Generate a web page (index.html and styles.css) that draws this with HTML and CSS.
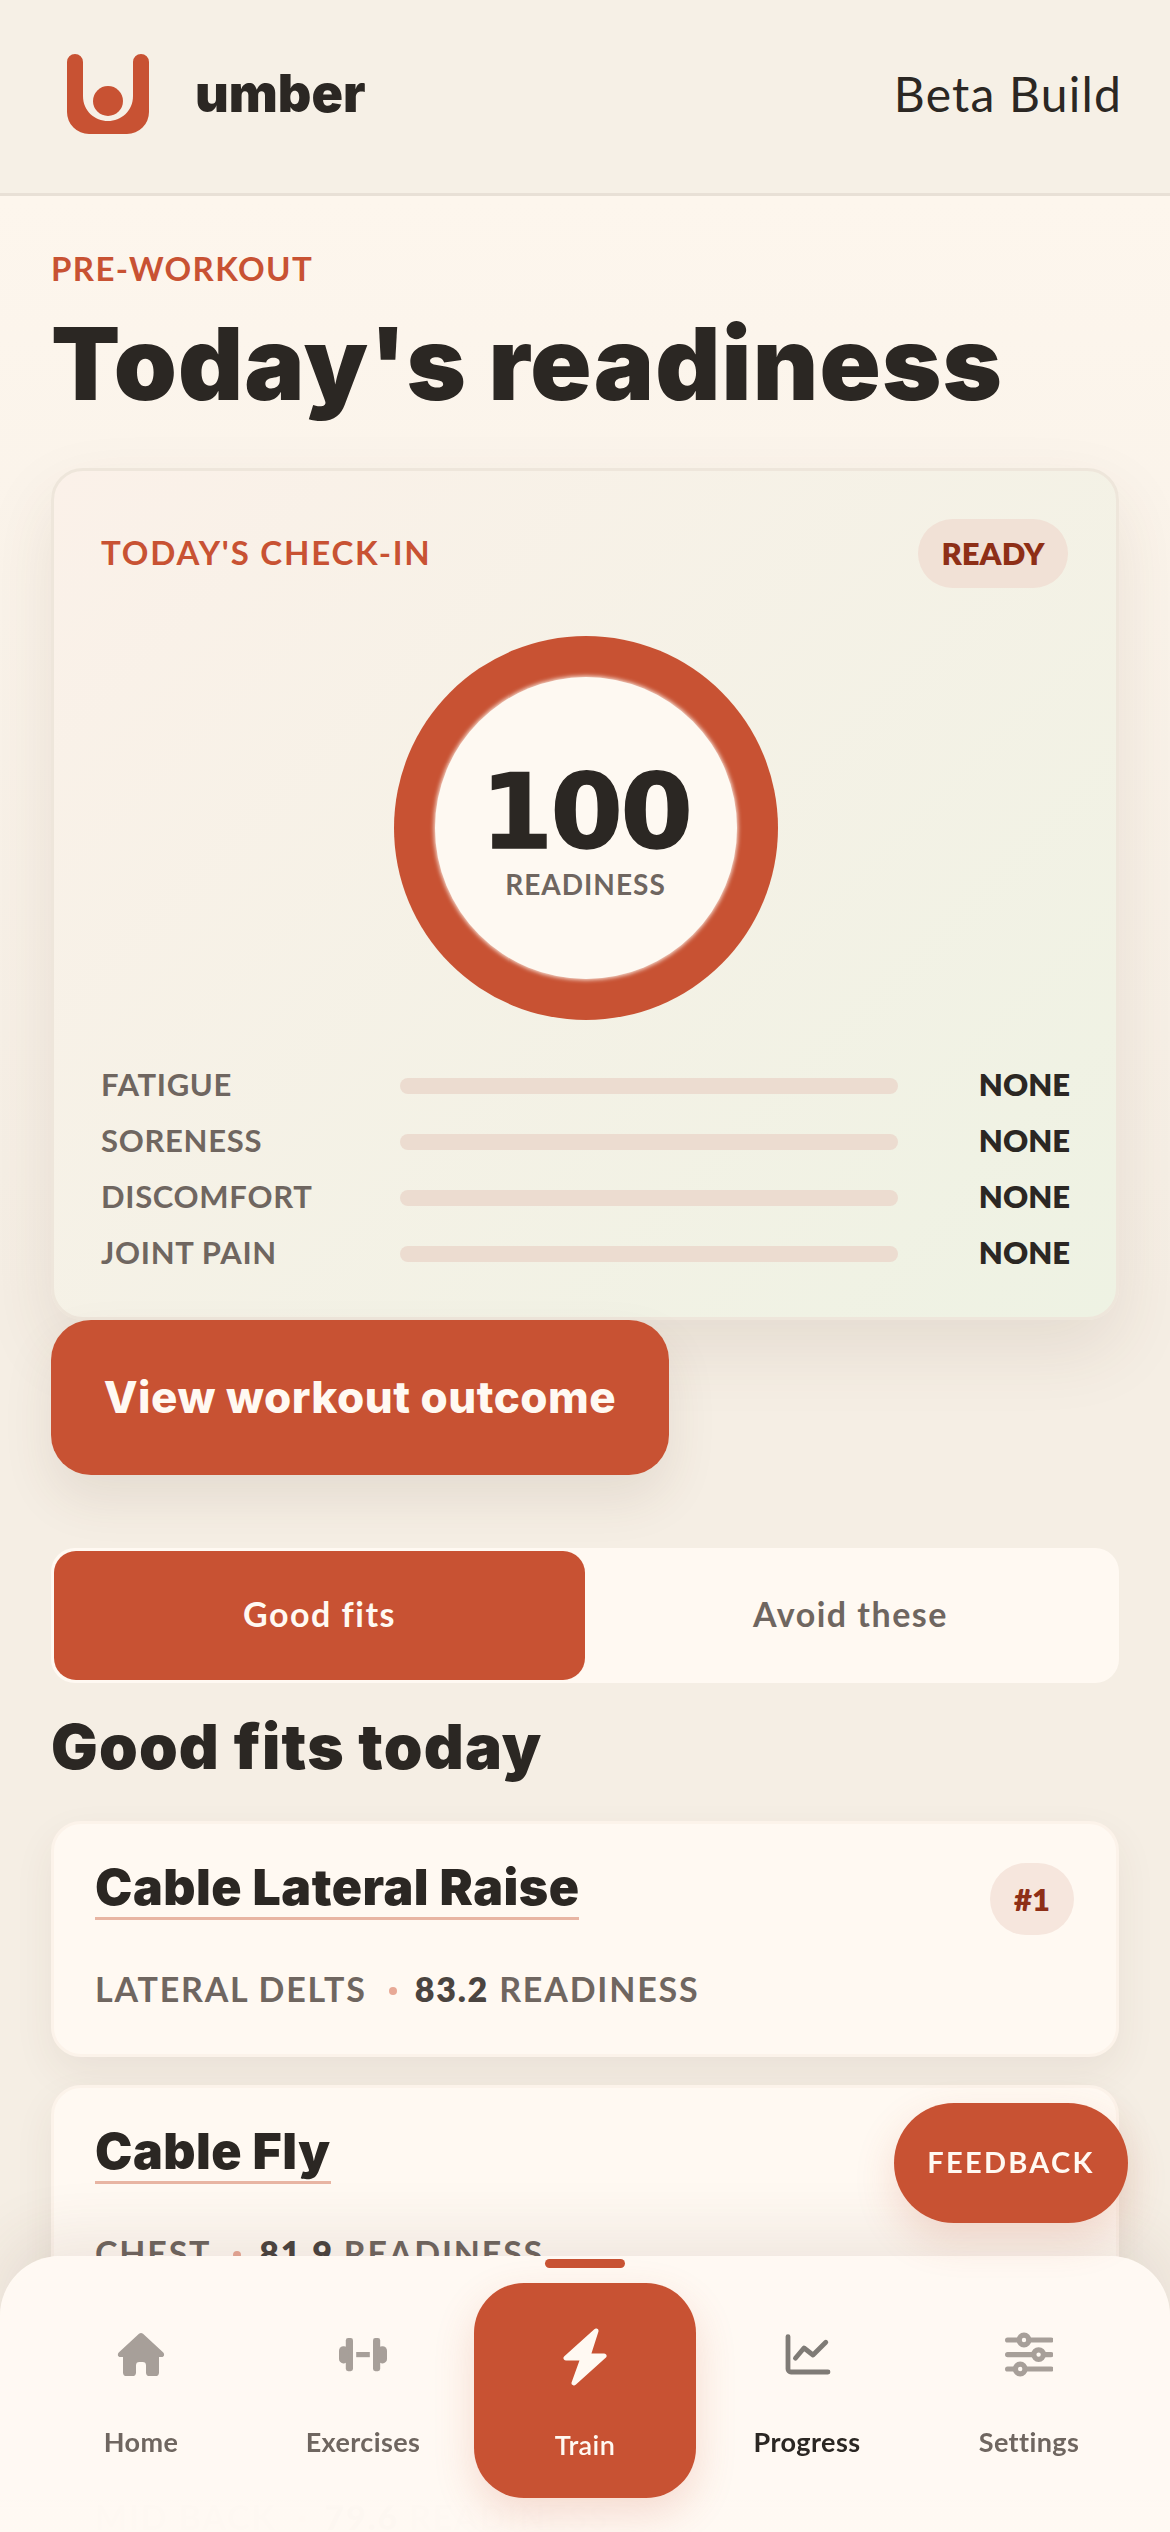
FILE: index.html
```html
<!doctype html>
<html>
<head>
    <meta charset="utf-8"/>
    <title>umber</title>
    <link rel="stylesheet" href="styles.css">
</head>
<body>

<header class="topbar">
    <div class="brand">
        <svg class="logo" viewBox="0 0 82 80">
            <path d="M0 8a8 8 0 0 1 16 0V42C16 57 28 67 41 67S66 57 66 42V8a8 8 0 0 1 16 0V58a22 22 0 0 1-22 22H22A22 22 0 0 1 0 58Z"/>
            <circle cx="41" cy="47" r="15"/>
        </svg>
        <span class="brand-name">umber</span>
    </div>
    <span class="build">Beta Build</span>
</header>

<main class="page">
    <div class="eyebrow">PRE-WORKOUT</div>
    <h1>Today's readiness</h1>

    <section class="checkin">
        <div class="checkin-head">
            <span class="checkin-title">TODAY'S CHECK-IN</span>
            <span class="pill">READY</span>
        </div>
        <div class="ring">
            <div class="ring-inner">
                <div class="score">100</div>
                <div class="score-label">READINESS</div>
            </div>
        </div>
        <div class="metrics">
            <div class="metric"><span class="metric-name">FATIGUE</span><div class="bar"></div><span class="metric-val">NONE</span></div>
            <div class="metric"><span class="metric-name">SORENESS</span><div class="bar"></div><span class="metric-val">NONE</span></div>
            <div class="metric"><span class="metric-name">DISCOMFORT</span><div class="bar"></div><span class="metric-val">NONE</span></div>
            <div class="metric"><span class="metric-name">JOINT PAIN</span><div class="bar"></div><span class="metric-val">NONE</span></div>
        </div>
    </section>

    <a class="cta">View workout outcome</a>

    <div class="tabs">
        <div class="tab active">Good fits</div>
        <div class="tab">Avoid these</div>
    </div>

    <h2>Good fits today</h2>

    <div class="fit">
        <div class="fit-head">
            <span class="fit-name">Cable Lateral Raise</span>
            <span class="rank">#1</span>
        </div>
        <div class="fit-meta">LATERAL DELTS<i class="dot"></i><b>83.2</b>&nbsp;READINESS</div>
    </div>
    <div class="fit">
        <div class="fit-head">
            <span class="fit-name">Cable Fly</span>
        </div>
        <div class="fit-meta">CHEST<i class="dot"></i><b>81.9</b>&nbsp;READINESS</div>
    </div>
    <div class="fit">
        <div class="fit-head"></div>
        <div class="fit-meta">MID BACK<i class="dot"></i><b>79.6</b>&nbsp;READINESS</div>
    </div>
</main>

<a class="feedback">FEEDBACK</a>

<nav class="tabbar">
    <i class="marker"></i>
    <a class="nav-item">
        <svg class="icon" viewBox="0 0 24 24"><path fill="currentColor" d="M11 1.4a1.5 1.5 0 0 1 2 0L23 10.6C24 11.6 23.6 13 22.4 13H21V20.7A1.8 1.8 0 0 1 19.2 22.5H16.3A1.8 1.8 0 0 1 14.5 20.7V17.2A1.7 1.7 0 0 0 12.8 15.5H11.2A1.7 1.7 0 0 0 9.5 17.2V20.7A1.8 1.8 0 0 1 7.7 22.5H4.8A1.8 1.8 0 0 1 3 20.7V13H1.6C.4 13 0 11.6 1 10.6Z"/></svg>
        <span>Home</span>
    </a>
    <a class="nav-item">
        <svg class="icon" viewBox="0 0 24 24" fill="currentColor">
            <rect x="3.4" y="3.5" width="3.6" height="16.6" rx="1.2"/>
            <rect x="17" y="3.5" width="3.6" height="16.6" rx="1.2"/>
            <rect x="0" y="7.6" width="4.6" height="8.6" rx="2.2"/>
            <rect x="19.4" y="7.6" width="4.6" height="8.6" rx="2.2"/>
            <rect x="8.6" y="10.5" width="6.8" height="2.6"/>
        </svg>
        <span>Exercises</span>
    </a>
    <a class="nav-item current">
        <svg class="bolt" viewBox="0 0 44 58"><path d="M33 3 3 30H20L11 55 41 28H25Z"/></svg>
        <span>Train</span>
    </a>
    <a class="nav-item seen">
        <svg class="icon" viewBox="0 0 24 24" fill="none" stroke="currentColor" stroke-width="2.4" stroke-linecap="round" stroke-linejoin="round">
            <path d="M2.5 2.8V19A1.5 1.5 0 0 0 4 20.5H22.5"/>
            <path d="M6.2 13.6 10.5 8.5 15 12 21.4 5.6"/>
        </svg>
        <span>Progress</span>
    </a>
    <a class="nav-item">
        <svg class="icon" viewBox="0 0 24 24" fill="none" stroke="currentColor" stroke-width="2.6" stroke-linecap="round">
            <path d="M1.3 4.5H23M1.3 11.8H23M1.3 19H23"/>
            <circle class="knob" cx="9.5" cy="4.5" r="2.4"/>
            <circle class="knob" cx="16.8" cy="11.8" r="2.4"/>
            <circle class="knob" cx="7.6" cy="19" r="2.4"/>
        </svg>
        <span>Settings</span>
    </a>
</nav>

</body>
</html>
```

FILE: styles.css
```css
* {
    box-sizing: border-box;
}
html, body {
    margin: 0;
    height: 100%;
    overflow: hidden;
}
body {
    background: linear-gradient(180deg, #fdf6ed 200px, #f5eee4 1300px);
    color: #2b2723;
    font-family: "Lato", "Noto Sans", sans-serif;
}
i {
    font-style: normal;
}

.topbar {
    height: 196px;
    display: flex;
    align-items: center;
    justify-content: space-between;
    padding: 0 48px 6px 67px;
    background: #f6f0e6;
    border-bottom: 3px solid #e8e0d6;
}
.brand {
    display: flex;
    align-items: center;
    gap: 46px;
}
.logo {
    width: 82px;
    height: 80px;
    fill: #c85233;
}
.brand-name {
    font-family: "Inter", sans-serif;
    font-size: 52px;
    font-weight: 900;
}
.build {
    font-size: 48px;
    letter-spacing: 1.2px;
}

.page {
    padding: 52px 51px 0;
}
.eyebrow {
    font-size: 33px;
    font-weight: 700;
    color: #c85233;
    line-height: 40px;
    letter-spacing: 1.4px;
}
h1 {
    margin: 13px 0 0;
    font-family: "Inter", sans-serif;
    font-size: 101px;
    font-weight: 900;
    line-height: 125px;
    letter-spacing: 1.2px;
}

.checkin {
    margin-top: 42px;
    height: 852px;
    padding: 48px 46px 0 47px;
    border: 3px solid #eee6db;
    border-radius: 32px;
    background: linear-gradient(135deg, #fbf1e9, #eef2e3);
    box-shadow: 0 30px 70px rgba(90, 60, 40, .1);
}
.checkin-head {
    display: flex;
    align-items: flex-start;
    justify-content: space-between;
    height: 71px;
}
.checkin-title {
    font-size: 33px;
    font-weight: 700;
    color: #c85233;
    line-height: 66px;
    letter-spacing: 1.8px;
}
.pill {
    width: 150px;
    margin-right: 2px;
    background: #f1e1d6;
    color: #8e2f17;
    font-size: 31px;
    font-weight: 800;
    line-height: 69px;
    text-align: center;
    border-radius: 36px;
}
.ring {
    width: 384px;
    height: 384px;
    margin: 46px auto 0;
    border-radius: 50%;
    background: #c85233;
    display: flex;
    align-items: center;
    justify-content: center;
}
.ring-inner {
    width: 302px;
    height: 302px;
    border-radius: 50%;
    background: #fef9f2;
    box-shadow: 0 0 4px 1px rgba(254, 249, 242, .9);
    text-align: center;
    padding-top: 80px;
}
.score {
    font-family: "DejaVu Sans", sans-serif;
    font-size: 104px;
    font-weight: 700;
    letter-spacing: -2.5px;
    line-height: 110px;
    -webkit-text-stroke: 1.5px #2b2723;
}
.score-label {
    font-size: 28px;
    font-weight: 700;
    color: #6f6660;
    line-height: 34px;
    letter-spacing: 1px;
}
.metrics {
    margin-top: 46px;
    display: flex;
    flex-direction: column;
    gap: 20px;
}
.metric {
    height: 36px;
    display: flex;
    align-items: center;
}
.metric-name {
    width: 299px;
    font-size: 31px;
    font-weight: 700;
    color: #6f6660;
    letter-spacing: .7px;
}
.bar {
    width: 498px;
    height: 16px;
    margin-top: 3px;
    border-radius: 8px;
    background: #ecdcd0;
}
.metric-val {
    margin-left: auto;
    font-size: 31px;
    font-weight: 800;
}

.cta {
    display: block;
    width: 618px;
    height: 155px;
    border-radius: 40px;
    background: #c85233;
    color: #fff9f2;
    font-family: "Inter", sans-serif;
    font-size: 44px;
    font-weight: 800;
    line-height: 155px;
    letter-spacing: .5px;
    text-align: center;
    box-shadow: 0 24px 50px rgba(90, 60, 40, .1);
}

.tabs {
    display: flex;
    height: 135px;
    margin-top: 73px;
    padding: 3px;
    border-radius: 24px;
    background: #fff9f2;
}
.tab {
    flex: 1;
    border-radius: 22px;
    font-size: 34px;
    font-weight: 700;
    color: #6f6660;
    line-height: 125px;
    letter-spacing: 1.5px;
    text-align: center;
}
.tab.active {
    background: #c85233;
    color: #fff9f2;
}

h2 {
    margin: 24px 0 0;
    font-family: "Inter", sans-serif;
    font-size: 62px;
    font-weight: 900;
    line-height: 80px;
    letter-spacing: 1.2px;
}

.fit {
    height: 236px;
    margin-bottom: 28px;
    padding: 34px 42px 0 41px;
    border: 3px solid #fcf3ea;
    border-radius: 30px;
    background: #fff9f2;
    box-shadow: 0 16px 40px rgba(90, 60, 40, .07);
}
h2 + .fit {
    margin-top: 34px;
}
.fit-head {
    display: flex;
    align-items: flex-start;
    justify-content: space-between;
    height: 77px;
}
.fit-name {
    font-family: "Inter", sans-serif;
    font-size: 50px;
    font-weight: 900;
    line-height: 58px;
    letter-spacing: .5px;
    height: 62px;
    border-bottom: 3px solid #e8b5a3;
}
.rank {
    width: 84px;
    height: 72px;
    margin-top: 5px;
    border-radius: 36px;
    background: #f6e6dd;
    color: #8e2f17;
    font-size: 31px;
    font-weight: 800;
    line-height: 72px;
    text-align: center;
}
.fit-meta {
    margin-top: 32px;
    font-size: 34px;
    font-weight: 700;
    color: #6f6660;
    line-height: 44px;
    letter-spacing: 1.8px;
    display: flex;
    align-items: center;
}
.fit-meta b {
    font-weight: 800;
    color: #4a4440;
}
.dot {
    width: 8px;
    height: 8px;
    margin: 4px 18px 0 22px;
    border-radius: 50%;
    background: #e8a996;
}

.feedback {
    position: fixed;
    left: 894px;
    top: 2103px;
    width: 234px;
    height: 120px;
    border-radius: 60px;
    background: #c85233;
    color: #fff9f2;
    font-size: 29px;
    font-weight: 700;
    letter-spacing: 2.3px;
    line-height: 118px;
    text-align: center;
    box-shadow: 0 16px 40px rgba(200, 82, 51, .18);
    z-index: 3;
}

.tabbar {
    position: fixed;
    left: 0;
    right: 0;
    bottom: 0;
    height: 276px;
    display: grid;
    grid-template-columns: repeat(5, 222px);
    justify-content: center;
    padding-top: 27px;
    border-radius: 60px 60px 0 0;
    background: linear-gradient(180deg, #fff9f3 88%, rgba(255, 249, 243, .992) 92%);
    box-shadow: 0 -24px 60px rgba(90, 60, 40, .09);
    z-index: 2;
}
.marker {
    position: absolute;
    left: 545px;
    top: 3px;
    width: 80px;
    height: 9px;
    border-radius: 5px;
    background: #c85233;
}
.nav-item {
    height: 215px;
    display: flex;
    flex-direction: column;
    align-items: center;
    padding-top: 48px;
    font-size: 27px;
    font-weight: 700;
    color: #6f6660;
    letter-spacing: .4px;
}
.nav-item span {
    margin-top: 45px;
    line-height: 36px;
}
.icon {
    width: 48px;
    height: 48px;
    color: #a79f99;
}
.knob {
    fill: #fff9f3;
}
.seen {
    color: #2b2723;
}
.seen .icon {
    color: #7f7b76;
}
.current {
    padding-top: 45px;
    border-radius: 50px;
    background: #c85233;
    color: #fff9f2;
    box-shadow: 0 16px 40px rgba(200, 82, 51, .18);
}
.current span {
    margin-top: 41px;
    font-weight: 600;
}
.bolt {
    width: 44px;
    height: 58px;
    fill: #fff9f2;
    stroke: #fff9f2;
    stroke-width: 5;
    stroke-linejoin: round;
}
```
